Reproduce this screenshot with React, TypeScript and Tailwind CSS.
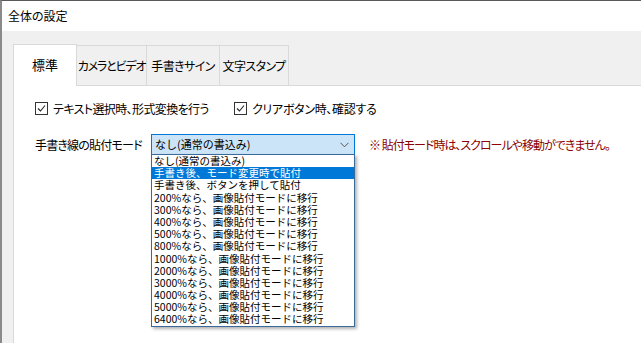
import React from "react";

const ui = "font-['Noto_Sans_CJK_JP','Noto_Sans',sans-serif] [font-feature-settings:'palt']";

const items = [
  "なし(通常の書込み)",
  "手書き後、モード変更時で貼付",
  "手書き後、ボタンを押して貼付",
  "200%なら、画像貼付モードに移行",
  "300%なら、画像貼付モードに移行",
  "400%なら、画像貼付モードに移行",
  "500%なら、画像貼付モードに移行",
  "800%なら、画像貼付モードに移行",
  "1000%なら、画像貼付モードに移行",
  "2000%なら、画像貼付モードに移行",
  "3000%なら、画像貼付モードに移行",
  "4000%なら、画像貼付モードに移行",
  "5000%なら、画像貼付モードに移行",
  "6400%なら、画像貼付モードに移行",
];

function CheckBox() {
  return (
    <span className="w-[13px] h-[13px] border border-[#333333] bg-white flex items-center justify-center shrink-0">
      <svg width="11" height="11" viewBox="0 0 11 11">
        <path d="M2 5.5 L4.5 8 L9 2.5" fill="none" stroke="#222" strokeWidth="1.1" />
      </svg>
    </span>
  );
}

export default function App() {
  return (
    <div className={`w-[641px] h-[343px] overflow-hidden flex flex-col bg-white border-t border-t-[#5a5a5a] border-l-2 border-l-[#8a8a8a] text-[#000] ${ui}`}>
      <div className="h-[30px] shrink-0 flex items-center pl-[6px] text-[12px] leading-none">全体の設定</div>
      <div className="flex-1 flex flex-col bg-[#f0f0f0] pl-[11px] pt-[13px]">
        <div className="flex items-end h-[42px] shrink-0 text-[12px] whitespace-nowrap">
          <div className="w-[64px] h-[42px] bg-white border-l border-t border-r border-[#d9d9d9] flex items-center justify-center text-[13px] pb-[2px]">標準</div>
          <div className="w-[70px] h-[41px] border-t border-r border-b border-[#d9d9d9] flex items-center justify-center tracking-[-1.2px]">カメラとビデオ</div>
          <div className="w-[73px] h-[41px] border-t border-r border-b border-[#d9d9d9] flex items-center justify-center tracking-[-0.6px]">手書きサイン</div>
          <div className="w-[69px] h-[41px] border-t border-r border-b border-[#d9d9d9] flex items-center justify-center tracking-[-0.6px]">文字スタンプ</div>
          <div className="flex-1 h-[41px] border-b border-[#d9d9d9]" />
        </div>
        <div className="flex-1 bg-white border-l border-[#d9d9d9] pl-[21px] pt-[16px] text-[12px] whitespace-nowrap">
          <div className="flex items-center h-[13px]">
            <CheckBox />
            <span className="ml-[5px] w-[181px] tracking-[-0.6px]">テキスト選択時、形式変換を行う</span>
            <CheckBox />
            <span className="ml-[5px] tracking-[-0.3px]">クリアボタン時、確認する</span>
          </div>
          <div className="flex items-center mt-[19px] h-[21px]">
            <span className="w-[116px] tracking-[-0.8px]">手書き線の貼付モード</span>
            <div className="relative w-[204px] h-[21px] shrink-0">
              <div className="w-full h-full bg-[#cce4f7] border border-[#0078d7] flex items-center pl-[3px] pr-[5px]">
                <span className="flex-1 text-[11px] [font-feature-settings:normal]">なし(通常の書込み)</span>
                <svg width="9" height="6" viewBox="0 0 9 6">
                  <path d="M0.5 0.8 L4.5 4.8 L8.5 0.8" fill="none" stroke="#555" strokeWidth="1" />
                </svg>
              </div>
              <div className="absolute left-0 top-[20px] w-[204px] bg-white border border-[#3a6a9a] shadow-[2px_2px_3px_rgba(0,0,0,0.3)] [font-feature-settings:normal]">
                {items.map((t, i) => (
                  <div
                    key={i}
                    className={
                      i === 1
                        ? "h-[12.2px] leading-[12.2px] text-[10.5px] pl-[2px] bg-[#0078d7] text-white"
                        : "h-[12.2px] leading-[12.2px] text-[10.5px] pl-[2px] text-black"
                    }
                  >
                    {t}
                  </div>
                ))}
              </div>
            </div>
            <span className="ml-[14px] text-[#8b0000] tracking-[-1px]">※ 貼付モード時は、スクロールや移動ができません。</span>
          </div>
        </div>
      </div>
    </div>
  );
}
